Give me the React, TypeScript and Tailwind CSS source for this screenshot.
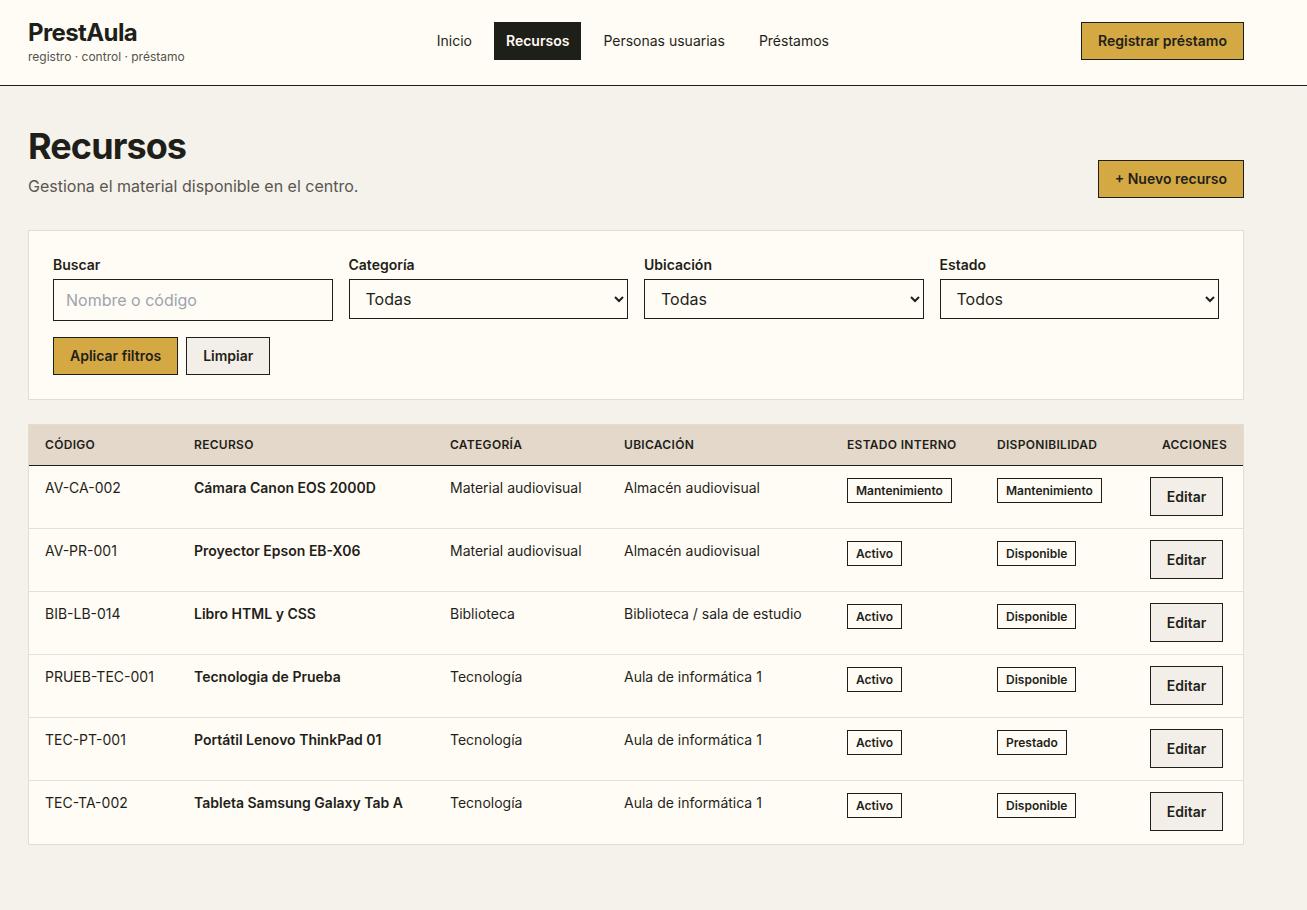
import type { ReactNode } from "react";

type Row = {
  codigo: string;
  recurso: string;
  categoria: string;
  ubicacion: string;
  estado: string;
  disponibilidad: string;
};

const rows: Row[] = [
  { codigo: "AV-CA-002", recurso: "Cámara Canon EOS 2000D", categoria: "Material audiovisual", ubicacion: "Almacén audiovisual", estado: "Mantenimiento", disponibilidad: "Mantenimiento" },
  { codigo: "AV-PR-001", recurso: "Proyector Epson EB-X06", categoria: "Material audiovisual", ubicacion: "Almacén audiovisual", estado: "Activo", disponibilidad: "Disponible" },
  { codigo: "BIB-LB-014", recurso: "Libro HTML y CSS", categoria: "Biblioteca", ubicacion: "Biblioteca / sala de estudio", estado: "Activo", disponibilidad: "Disponible" },
  { codigo: "PRUEB-TEC-001", recurso: "Tecnologia de Prueba", categoria: "Tecnología", ubicacion: "Aula de informática 1", estado: "Activo", disponibilidad: "Disponible" },
  { codigo: "TEC-PT-001", recurso: "Portátil Lenovo ThinkPad 01", categoria: "Tecnología", ubicacion: "Aula de informática 1", estado: "Activo", disponibilidad: "Prestado" },
  { codigo: "TEC-TA-002", recurso: "Tableta Samsung Galaxy Tab A", categoria: "Tecnología", ubicacion: "Aula de informática 1", estado: "Activo", disponibilidad: "Disponible" },
];

function Badge({ children }: { children: ReactNode }) {
  return (
    <span className="inline-flex h-[25px] items-center border border-[#1f1f1a] bg-[#fffcf5] px-2 text-xs font-semibold text-[#1f1f1a]">
      {children}
    </span>
  );
}

function Label({ children }: { children: ReactNode }) {
  return <label className="mb-1 block text-sm font-semibold leading-5 text-[#1f1f1a]">{children}</label>;
}

function FilterSelect({ label, value }: { label: string; value: string }) {
  return (
    <div>
      <Label>{label}</Label>
      <select
        defaultValue={value}
        className="h-10 w-full border border-[#1f1f1a] bg-[#fffcf5] px-3 text-base text-[#1f1f1a]"
      >
        <option>{value}</option>
      </select>
    </div>
  );
}

const navItems = ["Inicio", "Recursos", "Personas usuarias", "Préstamos"];

export default function App() {
  return (
    <div
      className="min-h-[910px] bg-[#f5f1eb] text-[#1f1f1a]"
      style={{ fontFamily: "Inter, 'Liberation Sans', sans-serif" }}
    >
      <header className="border-b border-[#1f1f1a] bg-[#fffcf5]">
        <div className="ml-7 flex h-[85px] w-[1216px] items-center justify-between pb-[3px]">
          <div>
            <div className="text-2xl font-bold leading-8 tracking-tight">PrestAula</div>
            <div className="text-xs leading-4 text-[#55524b]">registro · control · préstamo</div>
          </div>

          <nav className="flex items-center gap-2.5">
            {navItems.map((item) => (
              <a
                key={item}
                className={
                  item === "Recursos"
                    ? "flex h-[38px] items-center bg-[#1f1f1a] px-3 text-sm font-semibold text-[#fffcf5]"
                    : "flex h-[38px] items-center px-3 text-sm text-[#1f1f1a]"
                }
              >
                {item}
              </a>
            ))}
          </nav>

          <button className="h-[38px] border border-[#1f1f1a] bg-[#d4a843] px-4 text-sm font-semibold">
            Registrar préstamo
          </button>
        </div>
      </header>

      <main className="ml-7 w-[1216px] pt-10 pb-16">
        <div className="flex items-end justify-between">
          <div>
            <h1 className="text-4xl font-bold leading-10 tracking-tight">Recursos</h1>
            <p className="mt-2 text-base leading-6 text-[#5a5750]">Gestiona el material disponible en el centro.</p>
          </div>
          <button className="h-[38px] border border-[#1f1f1a] bg-[#d4a843] px-4 text-sm font-semibold">
            + Nuevo recurso
          </button>
        </div>

        <section className="mt-8 border border-[#e5dccd] bg-[#fffcf5] p-6">
          <div className="grid grid-cols-4 gap-4">
            <div>
              <Label>Buscar</Label>
              <input
                type="text"
                placeholder="Nombre o código"
                className="h-[42px] w-full border border-[#1f1f1a] bg-[#fffcf5] px-3 text-base placeholder:text-[#9ca3af]"
              />
            </div>
            <FilterSelect label="Categoría" value="Todas" />
            <FilterSelect label="Ubicación" value="Todas" />
            <FilterSelect label="Estado" value="Todos" />
          </div>
          <div className="mt-4 flex gap-2">
            <button className="h-[38px] border border-[#1f1f1a] bg-[#d4a843] px-4 text-sm font-semibold">
              Aplicar filtros
            </button>
            <button className="h-[38px] border border-[#1f1f1a] bg-[#f3efe8] px-4 text-sm font-semibold">
              Limpiar
            </button>
          </div>
        </section>

        <div className="mt-6 border border-[#e5dccd] bg-[#fffcf5]">
          <table className="w-full table-fixed border-collapse text-left text-sm">
            <colgroup>
              <col className="w-[149px]" />
              <col className="w-[256px]" />
              <col className="w-[174px]" />
              <col className="w-[223px]" />
              <col className="w-[150px]" />
              <col className="w-[153px]" />
              <col />
            </colgroup>
            <thead>
              <tr className="border-b border-[#1f1f1a] bg-[#e3d8ca] text-xs font-semibold uppercase tracking-wide">
                <th className="px-4 py-3 leading-4 font-semibold">Código</th>
                <th className="px-4 py-3 leading-4 font-semibold">Recurso</th>
                <th className="px-4 py-3 leading-4 font-semibold">Categoría</th>
                <th className="px-4 py-3 leading-4 font-semibold">Ubicación</th>
                <th className="px-4 py-3 leading-4 font-semibold">Estado interno</th>
                <th className="px-4 py-3 leading-4 font-semibold">Disponibilidad</th>
                <th className="px-4 py-3 text-right leading-4 font-semibold">Acciones</th>
              </tr>
            </thead>
            <tbody>
              {rows.map((r, i) => (
                <tr key={r.codigo} className={i < rows.length - 1 ? "border-b border-[#e8dfd0]" : ""}>
                  <td className="h-[63px] px-4 pt-3 align-top leading-5">{r.codigo}</td>
                  <td className="px-4 pt-3 align-top leading-5 font-semibold">{r.recurso}</td>
                  <td className="px-4 pt-3 align-top leading-5">{r.categoria}</td>
                  <td className="px-4 pt-3 align-top leading-5">{r.ubicacion}</td>
                  <td className="px-4 pt-3 align-top">
                    <Badge>{r.estado}</Badge>
                  </td>
                  <td className="px-4 pt-3 align-top">
                    <Badge>{r.disponibilidad}</Badge>
                  </td>
                  <td className="px-4 pt-[11px] pb-3 align-top">
                    <button className="h-[39px] w-[73px] border border-[#1f1f1a] bg-[#f3efe8] text-sm font-semibold">
                      Editar
                    </button>
                  </td>
                </tr>
              ))}
            </tbody>
          </table>
        </div>
      </main>
    </div>
  );
}
